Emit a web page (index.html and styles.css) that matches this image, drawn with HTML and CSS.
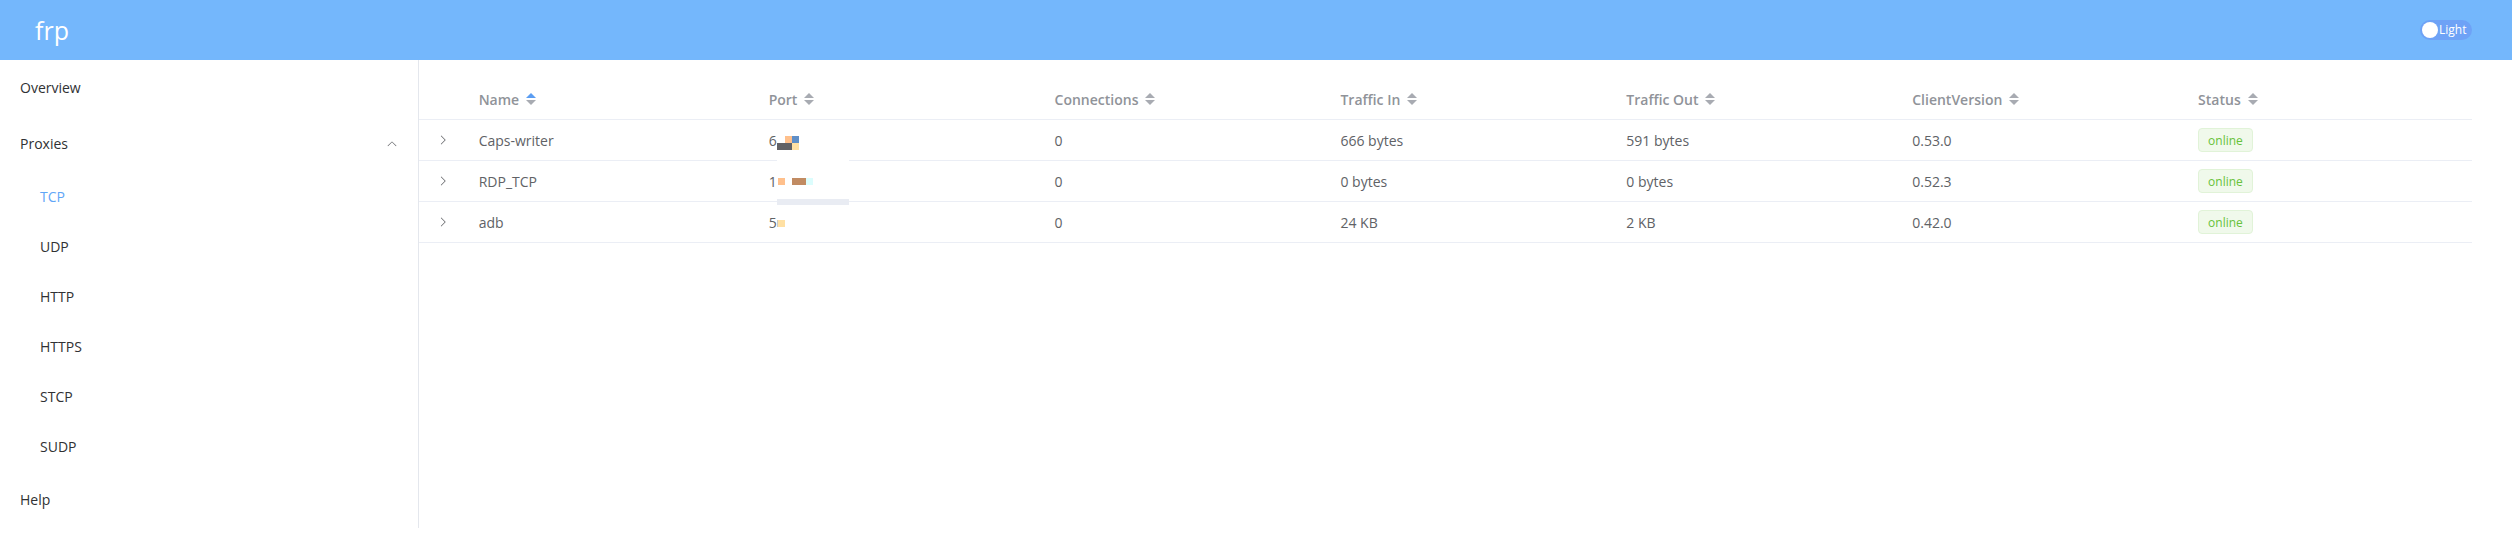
FILE: index.html
```html
<!DOCTYPE html>
<html lang="en">
<head>
<meta charset="utf-8">
<title>frp</title>
<link rel="stylesheet" href="styles.css">
</head>
<body>
<header class="header">
  <div class="brand"><a href="#">frp</a></div>
  <div class="dark-switch">
    <div class="switch">
      <span class="switch-knob"></span>
      <span class="switch-text">Light</span>
    </div>
  </div>
</header>
<section class="layout">
  <aside class="side-nav">
    <ul class="menu">
      <li class="menu-item">Overview</li>
      <li class="submenu">
        <div class="menu-item submenu-title">
          <span>Proxies</span>
          <svg class="submenu-arrow" viewBox="0 0 1024 1024" width="12" height="12"><path fill="currentColor" d="M831.872 340.864 512 652.672 192.128 340.864a30.592 30.592 0 0 0-42.752 0 29.12 29.12 0 0 0 0 41.6L489.664 714.24a32 32 0 0 0 44.672 0l340.288-331.712a29.12 29.12 0 0 0 0-41.728 30.592 30.592 0 0 0-42.752 0z"/></svg>
        </div>
        <ul class="submenu-list">
          <li class="sub-item active">TCP</li>
          <li class="sub-item">UDP</li>
          <li class="sub-item">HTTP</li>
          <li class="sub-item">HTTPS</li>
          <li class="sub-item">STCP</li>
          <li class="sub-item">SUDP</li>
        </ul>
      </li>
      <li class="menu-item">Help</li>
    </ul>
  </aside>
  <main class="content">
    <table class="table">
      <colgroup>
        <col class="col-expand">
        <col class="col-name">
        <col><col><col><col><col><col>
      </colgroup>
      <thead>
        <tr>
          <th></th>
          <th><div class="cell">Name<svg class="caret" width="24" height="14" viewBox="0 0 24 14"><polygon class="up on" points="7,5 17,5 12,0"/><polygon class="down" points="7,7 17,7 12,12"/></svg></div></th>
          <th><div class="cell">Port<svg class="caret" width="24" height="14" viewBox="0 0 24 14"><polygon class="up" points="7,5 17,5 12,0"/><polygon class="down" points="7,7 17,7 12,12"/></svg></div></th>
          <th><div class="cell">Connections<svg class="caret" width="24" height="14" viewBox="0 0 24 14"><polygon class="up" points="7,5 17,5 12,0"/><polygon class="down" points="7,7 17,7 12,12"/></svg></div></th>
          <th><div class="cell">Traffic In<svg class="caret" width="24" height="14" viewBox="0 0 24 14"><polygon class="up" points="7,5 17,5 12,0"/><polygon class="down" points="7,7 17,7 12,12"/></svg></div></th>
          <th><div class="cell">Traffic Out<svg class="caret" width="24" height="14" viewBox="0 0 24 14"><polygon class="up" points="7,5 17,5 12,0"/><polygon class="down" points="7,7 17,7 12,12"/></svg></div></th>
          <th><div class="cell">ClientVersion<svg class="caret" width="24" height="14" viewBox="0 0 24 14"><polygon class="up" points="7,5 17,5 12,0"/><polygon class="down" points="7,7 17,7 12,12"/></svg></div></th>
          <th><div class="cell">Status<svg class="caret" width="24" height="14" viewBox="0 0 24 14"><polygon class="up" points="7,5 17,5 12,0"/><polygon class="down" points="7,7 17,7 12,12"/></svg></div></th>
        </tr>
      </thead>
      <tbody>
        <tr>
          <td><div class="cell expand"><svg viewBox="0 0 1024 1024" width="12" height="12"><path fill="currentColor" d="M340.864 149.312a30.592 30.592 0 0 0 0 43.264L659.2 512 340.864 831.424a30.592 30.592 0 0 0 0 43.264 30.592 30.592 0 0 0 43.264 0L724.8 534.656a30.592 30.592 0 0 0 0-43.264L384.128 149.312a30.592 30.592 0 0 0-43.264 0z"/></svg></div></td>
          <td><div class="cell">Caps-writer</div></td>
          <td><div class="cell port">6<span class="px p-peach r1a"></span><span class="px p-blue r1b"></span><span class="px p-dark r1c"></span><span class="px p-yellow r1d"></span><span class="px p-white r1e"></span></div></td>
          <td><div class="cell">0</div></td>
          <td><div class="cell">666 bytes</div></td>
          <td><div class="cell">591 bytes</div></td>
          <td><div class="cell">0.53.0</div></td>
          <td><div class="cell"><span class="tag">online</span></div></td>
        </tr>
        <tr>
          <td><div class="cell expand"><svg viewBox="0 0 1024 1024" width="12" height="12"><path fill="currentColor" d="M340.864 149.312a30.592 30.592 0 0 0 0 43.264L659.2 512 340.864 831.424a30.592 30.592 0 0 0 0 43.264 30.592 30.592 0 0 0 43.264 0L724.8 534.656a30.592 30.592 0 0 0 0-43.264L384.128 149.312a30.592 30.592 0 0 0-43.264 0z"/></svg></div></td>
          <td><div class="cell">RDP_TCP</div></td>
          <td><div class="cell port">1<span class="px p-peach r2a"></span><span class="px p-brown r2b"></span><span class="px p-cyan r2c"></span><span class="px p-gray r2d"></span></div></td>
          <td><div class="cell">0</div></td>
          <td><div class="cell">0 bytes</div></td>
          <td><div class="cell">0 bytes</div></td>
          <td><div class="cell">0.52.3</div></td>
          <td><div class="cell"><span class="tag">online</span></div></td>
        </tr>
        <tr>
          <td><div class="cell expand"><svg viewBox="0 0 1024 1024" width="12" height="12"><path fill="currentColor" d="M340.864 149.312a30.592 30.592 0 0 0 0 43.264L659.2 512 340.864 831.424a30.592 30.592 0 0 0 0 43.264 30.592 30.592 0 0 0 43.264 0L724.8 534.656a30.592 30.592 0 0 0 0-43.264L384.128 149.312a30.592 30.592 0 0 0-43.264 0z"/></svg></div></td>
          <td><div class="cell">adb</div></td>
          <td><div class="cell port">5<span class="px p-line r3a"></span><span class="px p-yellow r3b"></span></div></td>
          <td><div class="cell">0</div></td>
          <td><div class="cell">24 KB</div></td>
          <td><div class="cell">2 KB</div></td>
          <td><div class="cell">0.42.0</div></td>
          <td><div class="cell"><span class="tag">online</span></div></td>
        </tr>
      </tbody>
    </table>
  </main>
</section>
</body>
</html>
```

FILE: styles.css
```css
* { box-sizing: border-box; }
html, body {
  margin: 0;
  padding: 0;
  background: #ffffff;
  font-family: "Open Sans", "Noto Sans", "Noto Sans CJK SC", sans-serif;
  font-size: 14px;
  color: #303133;
}

/* header */
.header {
  height: 60px;
  background: #74b7fc;
  display: flex;
  align-items: center;
}
.brand { display: flex; }
.brand a {
  color: #ffffff;
  text-decoration: none;
  margin-left: 20px;
  padding: 15px;
  font-size: 25px;
  line-height: 30px;
  height: 60px;
}
.dark-switch {
  flex-grow: 1;
  display: flex;
  justify-content: flex-end;
  padding-right: 40px;
}
.switch {
  width: 52px;
  height: 20px;
  border-radius: 10px;
  background: #6ea2f6;
  display: flex;
  align-items: center;
  padding-left: 2px;
  gap: 1px;
}
.switch-knob {
  width: 16px;
  height: 16px;
  border-radius: 50%;
  background: #ffffff;
  flex: none;
}
.switch-text {
  color: #ffffff;
  font-size: 12px;
  line-height: 20px;
}

/* layout */
.layout {
  display: flex;
  align-items: flex-start;
}
.side-nav {
  width: calc(100% / 6);
  flex: none;
}
.content {
  flex: 1;
  padding-top: 20px;
  padding-right: 40px;
  min-width: 0;
}

/* menu */
.menu {
  list-style: none;
  margin: 0;
  padding: 0;
  border-right: 1px solid #e4e7ed;
}
.menu-item {
  height: 56px;
  line-height: 56px;
  padding: 0 20px;
  color: #303133;
}
.submenu { list-style: none; }
.submenu-title {
  display: flex;
  align-items: center;
  justify-content: space-between;
}
.submenu-arrow {
  transform: rotate(180deg);
  color: #606266;
}
.submenu-list {
  list-style: none;
  margin: 0;
  padding: 0;
}
.sub-item {
  height: 50px;
  line-height: 50px;
  padding-left: 40px;
  color: #303133;
}
.sub-item.active { color: #5fa6f7; }

/* table */
.table {
  width: 100%;
  table-layout: fixed;
  border-collapse: collapse;
  font-size: 14px;
  color: #606266;
}
.col-expand { width: 48px; }
.col-name { width: 290px; }
.table th, .table td {
  padding: 8px 0;
  border-bottom: 1px solid #ebeef5;
  text-align: left;
  vertical-align: middle;
}
.table th {
  color: #909399;
  font-weight: 600;
}
.cell {
  padding: 0 12px;
  line-height: 23px;
  white-space: nowrap;
  display: flex;
  align-items: center;
}
.caret { flex: none; }
.caret polygon { fill: #a8abb2; }
.caret polygon.on { fill: #5b9df2; }
.expand {
  justify-content: center;
  padding: 0;
  color: #606266;
}
.tag {
  display: inline-flex;
  align-items: center;
  height: 24px;
  padding: 0 9px;
  font-size: 12px;
  color: #67c23a;
  background: #f0f9eb;
  border: 1px solid #e1f3d8;
  border-radius: 4px;
}

/* redaction blobs in the Port column */
.port { position: relative; }
.px { position: absolute; height: 7px; width: 7px; }
.p-peach { background: #ffc08c; }
.p-blue { background: #5f8fc8; }
.p-dark { background: #616165; }
.p-yellow { background: #ffe0a3; }
.p-white { background: #ffffff; }
.p-brown { background: #c18b62; }
.p-cyan { background: #dcfdfd; }
.p-gray { background: #e9ecf3; }
.p-line { background: #c9c9c9; }
.r1a { left: 28px; top: 7px; }
.r1b { left: 35px; top: 7px; }
.r1c { left: 20px; top: 14px; width: 15px; }
.r1d { left: 35px; top: 14px; }
.r1e { left: 20px; top: 30px; width: 72px; height: 4px; }
.r2a { left: 21px; top: 8px; }
.r2b { left: 35px; top: 8px; width: 14px; }
.r2c { left: 49px; top: 8px; }
.r2d { left: 20px; top: 29px; width: 72px; height: 6px; }
.r3a { left: 20px; top: 9px; width: 1px; }
.r3b { left: 21px; top: 9px; }
```
